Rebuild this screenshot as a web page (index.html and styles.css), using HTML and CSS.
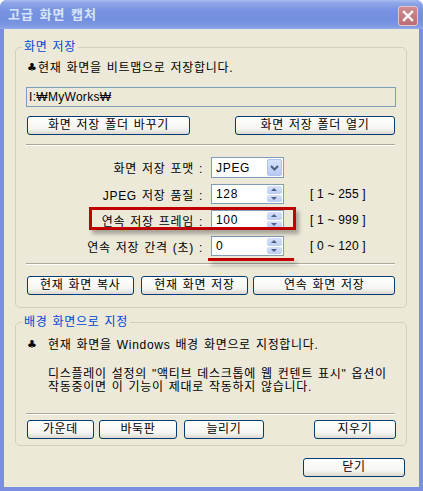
FILE: index.html
```html
<!DOCTYPE html>
<html lang="ko">
<head>
	<meta charset="utf-8">
	<title>고급 화면 캡처</title>
	<link rel="stylesheet" href="styles.css">
</head>
<body>
	<div class="window">
		<div class="titlebar">
			<span class="title">고급 화면 캡처</span>
			<span class="close">
				<svg width="12" height="12" viewBox="0 0 12 12"><path d="M2 2L10 10M10 2L2 10" stroke="#fff" stroke-width="2.4" stroke-linecap="square"/></svg>
			</span>
		</div>
		<div class="client">
			<fieldset class="group group-save">
				<legend>화면 저장</legend>
				<p class="note"><span class="club">♣</span>현재 화면을 비트맵으로 저장합니다.</p>
				<div class="path">I:₩MyWorks₩</div>
				<div class="btn-row spread">
					<div class="btn w-change">화면 저장 폴더 바꾸기</div>
					<div class="btn w-open">화면 저장 폴더 열기</div>
				</div>
				<div class="sep"></div>
				<div class="form">
					<label>화면 저장 포맷 :</label>
					<div class="field select">
						<span class="val">JPEG</span>
						<span class="drop"><svg width="9" height="6" viewBox="0 0 9 6"><path d="M1 1L4.5 4.5L8 1" fill="none" stroke="#4d6185" stroke-width="2"/></svg></span>
					</div>
					<span class="range"></span>

					<label>JPEG 저장 품질 :</label>
					<div class="field spin">
						<span class="val">128</span>
						<span class="arrows"><span class="up"></span><span class="down"></span></span>
					</div>
					<span class="range">[ 1 ~ 255 ]</span>

					<label>연속 저장 프레임 :</label>
					<div class="field spin">
						<span class="val">100</span>
						<span class="arrows"><span class="up"></span><span class="down"></span></span>
					</div>
					<span class="range">[ 1 ~ 999 ]</span>

					<label>연속 저장 간격 (초) :</label>
					<div class="field spin">
						<span class="val">0</span>
						<span class="arrows"><span class="up"></span><span class="down"></span></span>
					</div>
					<span class="range">[ 0 ~ 120 ]</span>

					<span class="mark mark-box"></span>
					<span class="mark mark-line"></span>
				</div>
				<div class="sep sep-low"></div>
				<div class="btn-row tight">
					<div class="btn w-copy">현재 화면 복사</div>
					<div class="btn w-save">현재 화면 저장</div>
					<div class="btn w-multi">연속 화면 저장</div>
				</div>
			</fieldset>

			<fieldset class="group group-wall">
				<legend>배경 화면으로 지정</legend>
				<p class="note wide"><span class="club">♣</span>현재 화면을 Windows 배경 화면으로 지정합니다.</p>
				<p class="desc">디스플레이 설정의 "액티브 데스크톱에 웹 컨텐트 표시" 옵션이<br>작동중이면 이 기능이 제대로 작동하지 않습니다.</p>
				<div class="sep sep-wall"></div>
				<div class="btn-row wall">
					<div class="btn w-center">가운데</div>
					<div class="btn w-tile">바둑판</div>
					<div class="btn w-stretch">늘리기</div>
					<div class="btn w-clear">지우기</div>
				</div>
			</fieldset>

			<div class="footer">
				<div class="btn w-close">닫기</div>
			</div>
		</div>
	</div>
</body>
</html>
```

FILE: styles.css
```css
body {
	margin: 0;
	background: #fff;
	font-family: "Liberation Sans", "Noto Sans CJK KR", sans-serif;
	font-size: 12px;
	letter-spacing: 0.7px;
	word-spacing: 1px;
	color: #000;
}
.window {
	width: 423px;
	height: 491px;
	background: #7b8fe2;
	border-radius: 7px 7px 0 0;
	display: flex;
	flex-direction: column;
}
.titlebar {
	height: 29px;
	display: flex;
	align-items: center;
	justify-content: space-between;
	padding: 0 5px 0 8px;
	box-sizing: border-box;
	border-radius: 7px 7px 0 0;
	background: linear-gradient(#a9bcef 0, #8ea6e8 3px, #7893e0 10px, #738fdf 20px, #7f9ae3 26px, #93aaea 29px);
}
.title {
	color: #d8e4f8;
	font-size: 13px;
	font-weight: bold;
	letter-spacing: 1px;
	word-spacing: 1px;
	font-family: "Noto Sans CJK KR", sans-serif;
	padding-bottom: 2px;
}
.close {
	width: 20px;
	height: 20px;
	box-sizing: border-box;
	border: 1px solid #e9c5c9;
	border-radius: 3px;
	background: linear-gradient(#cf8c92, #bd6c74);
	display: flex;
	align-items: center;
	justify-content: center;
	margin-top: 2px;
}
.client {
	flex: 1;
	margin: 0 4px 4px;
	background: #ece9d8;
	overflow: hidden;
}
.group {
	margin: 0 12px 0 11px;
	padding: 0 11px;
	border: 1px solid #d0d0bf;
	border-radius: 5px;
	box-sizing: border-box;
	min-width: 0;
}
.group-save {
	margin-top: 11px;
	padding-bottom: 12px;
}
.group-wall {
	margin-top: 7px;
	padding-bottom: 6px;
}
legend {
	color: #0046d5;
	line-height: 14px;
	padding: 0 2px;
	margin-left: -5px;
}
.note {
	margin: 6px 0 0;
	line-height: 16px;
	display: flex;
}
.club {
	width: 11px;
	flex: none;
	font-family: "DejaVu Sans", sans-serif;
	font-size: 11px;
	font-weight: bold;
	letter-spacing: 0;
}
.note.wide {
	margin-top: 8px;
}
.note.wide .club {
	width: 21px;
}
.desc {
	margin: 15px 0 0 21px;
	line-height: 13px;
}
.path {
	margin: 11px -1px 0;
	height: 20px;
	box-sizing: border-box;
	border: 1px solid #7f9db9;
	padding: 0 2px;
	line-height: 18px;
	letter-spacing: 0.3px;
}
.btn-row {
	display: flex;
	margin-top: 9px;
}
.btn-row.spread {
	justify-content: space-between;
}
.btn-row.tight {
	margin-top: 11px;
}
.btn-row.wall {
	margin-top: 5px;
}
.btn {
	height: 19px;
	box-sizing: border-box;
	border: 1px solid #003c74;
	border-radius: 3px;
	background: linear-gradient(#ffffff, #f4f4f0 70%, #dcd8ce);
	text-align: center;
	line-height: 17px;
	font-size: 12px;
}
.w-change { width: 163px; }
.w-open { width: 160px; }
.w-copy { width: 107px; }
.w-save { width: 108px; margin-left: 7px; }
.w-multi { width: 142px; margin-left: 5px; }
.w-center { width: 67px; }
.w-tile { width: 78px; margin-left: 5px; }
.w-stretch { width: 80px; margin-left: 7px; }
.w-clear { width: 82px; margin-left: auto; margin-right: -1px; }
.sep {
	margin-top: 9px;
	height: 1px;
	background: #aca899;
	border-bottom: 1px solid #fff;
	margin-left: -1px;
}
.sep-low {
	margin-top: 7px;
}
.sep-wall {
	margin-top: 19px;
}
.form {
	position: relative;
	margin-top: 11px;
	display: grid;
	grid-template-columns: 176px 73px auto;
	grid-template-rows: 21px 20px 20px 20px;
	column-gap: 8px;
	row-gap: 6px;
	align-items: center;
}
.form label {
	text-align: right;
	white-space: nowrap;
}
.field {
	height: 100%;
	box-sizing: border-box;
	border: 1px solid #7f9db9;
	background: #fff;
	display: flex;
	align-items: stretch;
	padding: 1px;
}
.field .val {
	flex: 1;
	padding-left: 3px;
	line-height: 17px;
}
.select .val {
	line-height: 18px;
}
.drop {
	width: 15px;
	border-radius: 2px;
	background: linear-gradient(#d6e1fb, #b8caf4);
	border: 1px solid #b0c3f0;
	box-sizing: border-box;
	display: flex;
	align-items: center;
	justify-content: center;
}
.arrows {
	width: 15px;
	display: flex;
	flex-direction: column;
	gap: 1px;
}
.arrows span {
	flex: 1;
	border-radius: 2px;
	background: linear-gradient(#d6e1fb, #bccdf4);
	position: relative;
}
.arrows span::after {
	content: "";
	position: absolute;
	left: 4px;
	top: 2px;
	border-left: 3px solid transparent;
	border-right: 3px solid transparent;
}
.arrows .up::after {
	border-bottom: 3px solid #4d6185;
}
.arrows .down::after {
	border-top: 3px solid #4d6185;
}
.range {
	margin-left: 18px;
	white-space: pre;
	letter-spacing: 0.2px;
	word-spacing: 0;
}
.mark {
	position: absolute;
	background: transparent;
}
.mark-box {
	left: 62px;
	top: 50px;
	width: 207px;
	height: 23px;
	box-sizing: border-box;
	border: 3px solid #c00000;
	box-shadow: 3px 4px 4px rgba(0, 0, 0, 0.3);
}
.mark-line {
	left: 181px;
	top: 101px;
	width: 86px;
	height: 3px;
	background: #c00000;
	box-shadow: 3px 4px 4px rgba(0, 0, 0, 0.3);
}
.footer {
	display: flex;
	justify-content: flex-end;
	margin-top: 12px;
	padding-right: 14px;
}
.w-close { width: 102px; }
```
